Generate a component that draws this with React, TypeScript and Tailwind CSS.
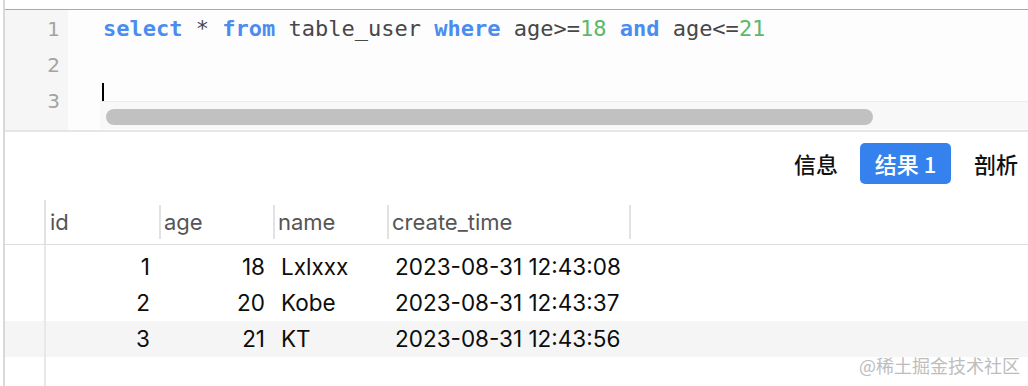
import React from "react";

const mono = { fontFamily: '"DejaVu Sans Mono", "Liberation Mono", monospace' };

function Kw({ children }: { children: React.ReactNode }) {
  return <span className="text-[#4a8cef] font-bold">{children}</span>;
}
function Num({ children }: { children: React.ReactNode }) {
  return <span className="text-[#5cb86a]">{children}</span>;
}

const rows = [
  { id: 1, age: 18, name: "Lxlxxx", t: "2023-08-31 12:43:08" },
  { id: 2, age: 20, name: "Kobe", t: "2023-08-31 12:43:37" },
  { id: 3, age: 21, name: "KT", t: "2023-08-31 12:43:56" },
];

export default function App() {
  return (
    <div
      className="w-[1028px] h-[386px] bg-white overflow-hidden relative"
      style={{ fontFamily: 'Inter, "Noto Sans", "Noto Sans CJK SC", sans-serif' }}
    >
      <div className="ml-[3px] h-full border-l-2 border-[#d9d9d9] flex flex-col">
        {/* top blank */}
        <div className="h-[9px] bg-white" />
        {/* editor */}
        <div className="h-[121px] border-t border-[#a9a9a9] flex bg-[#fdfdfd] relative">
          <div
            className="w-[63px] bg-[#f6f6f6] flex flex-col items-end pr-[8px] pt-[1px] text-[20px] text-[#a3a3a3]"
            style={{ fontFamily: '"DejaVu Sans", sans-serif' }}
          >
            <div className="h-[36px] leading-[36px]">1</div>
            <div className="h-[36px] leading-[36px]">2</div>
            <div className="h-[36px] leading-[36px]">3</div>
          </div>
          <div className="flex-1 pl-[35px] pt-[1px] text-[22px] text-[#474747]" style={mono}>
            <div className="h-[36px] leading-[36px] whitespace-pre">
              <Kw>select</Kw> * <Kw>from</Kw> table_user <Kw>where</Kw> age&gt;=<Num>18</Num> <Kw>and</Kw> age&lt;=<Num>21</Num>
            </div>
            <div className="h-[36px]" />
            <div className="h-[36px] relative">
              <div className="absolute left-[-1px] top-[0px] w-[2px] h-[19px] bg-black" />
            </div>
          </div>
          {/* horizontal scrollbar overlay */}
          <div className="absolute left-[95px] right-0 top-[91px] h-[28px] bg-[#f8f8f8] border-t border-[#ebebeb]">
            <div className="absolute left-[6px] top-[7px] w-[767px] h-[16px] rounded-full bg-[#c1c1c1]" />
          </div>
        </div>
        <div className="h-[2px] bg-[#e6e6e6]" />
        {/* tabs */}
        <div
          className="h-[68px] flex items-start justify-end pt-[11px] pr-[10px] text-[22px] font-medium text-[#111]"
          style={{ fontFamily: '"Noto Sans CJK SC", sans-serif' }}
        >
          <div className="h-[41px] flex items-center mr-[22px]">信息</div>
          <div className="w-[91px] h-[41px] rounded-[5px] bg-[#3581ee] text-white flex items-center justify-center mr-[23px]">
            结果 1
          </div>
          <div className="h-[41px] flex items-center">剖析</div>
        </div>
        {/* table */}
        <div className="flex-1 flex flex-col relative">
          <div className="h-[45px] border-b border-[#dedede] flex text-[22px] text-[#555]">
            <div className="w-[39px]" />
            <div className="w-[115px] border-l-2 border-[#e2e2e2] pl-[4px] flex items-center">id</div>
            <div className="w-[114px] flex items-center">
              <div className="w-[2px] h-[34px] bg-[#e2e2e2] mr-[3px]" />
              age
            </div>
            <div className="w-[114px] flex items-center">
              <div className="w-[2px] h-[34px] bg-[#e2e2e2] mr-[3px]" />
              name
            </div>
            <div className="w-[242px] flex items-center">
              <div className="w-[2px] h-[34px] bg-[#e2e2e2] mr-[3px]" />
              create_time
            </div>
            <div className="flex items-center">
              <div className="w-[2px] h-[34px] bg-[#e2e2e2]" />
            </div>
          </div>
          <div className="flex-1 pt-[4px] text-[22.5px] text-[#0d0d0d]">
            {rows.map((r, i) => (
              <div key={r.id} className={`h-[36px] flex items-center ${i === 2 ? "bg-[#f5f5f5]" : ""}`}>
                <div className="w-[39px]" />
                <div className="w-[115px] text-right pr-[9px]">{r.id}</div>
                <div className="w-[114px] text-right pr-[8px]">{r.age}</div>
                <div className="w-[114px] pl-[8px]">{r.name}</div>
                <div className="w-[242px] pl-[8px] whitespace-nowrap">{r.t}</div>
              </div>
            ))}
          </div>
          <div className="absolute left-[39px] top-[45px] bottom-0 w-[2px] bg-[#e8e8e8]" />
        </div>
      </div>
      <div
        className="absolute right-[8px] bottom-[7px] text-[18px] text-[#bdbdbd]"
        style={{ fontFamily: '"Noto Sans CJK SC", sans-serif' }}
      >
        @稀土掘金技术社区
      </div>
    </div>
  );
}
